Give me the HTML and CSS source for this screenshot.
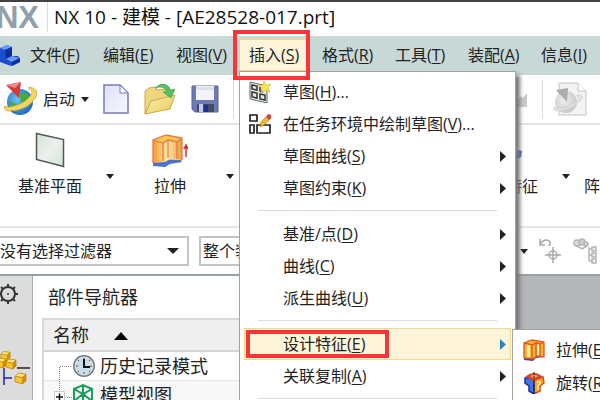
FILE: index.html
```html
<!DOCTYPE html>
<html lang="zh-CN">
<head>
<meta charset="utf-8">
<title>NX 10 - 建模</title>
<link rel="stylesheet" href="styles.css">
</head>
<body>
<svg class="defs" aria-hidden="true">
  <defs>
    <linearGradient id="gOrange" x1="0" x2="1"><stop offset="0" stop-color="#f59a2c"/><stop offset=".5" stop-color="#fbe9a8"/><stop offset="1" stop-color="#ef9a3c"/></linearGradient>
    <linearGradient id="gPlane" x1="0" y1="0" x2="1" y2="1"><stop offset="0" stop-color="#cfe3d3"/><stop offset=".5" stop-color="#eef0ee"/><stop offset="1" stop-color="#cfe3d0"/></linearGradient>
    <linearGradient id="gPage" x1="0" y1="0" x2="1" y2="1"><stop offset="0" stop-color="#dfe0fa"/><stop offset="1" stop-color="#f8f8ff"/></linearGradient>
    <linearGradient id="gFolder" x1="0" y1="0" x2="1" y2="1"><stop offset="0" stop-color="#fdf0b4"/><stop offset="1" stop-color="#e9c95a"/></linearGradient>
    <radialGradient id="gGlobe" cx=".4" cy=".4" r=".7"><stop offset="0" stop-color="#6ec2f5"/><stop offset="1" stop-color="#1560b8"/></radialGradient>
    <radialGradient id="gGrey" cx=".4" cy=".4" r=".7"><stop offset="0" stop-color="#efefef"/><stop offset="1" stop-color="#c4c4c4"/></radialGradient>
    <symbol id="caret" viewBox="0 0 8 5"><path d="M0 0h8L4 5z"/></symbol>
    <symbol id="arrow" viewBox="0 0 6 11"><path d="M0 0l6 5.500L0 11z"/></symbol>
    <symbol id="cube" viewBox="0 0 12 12"><path d="M1 4l3-3 7 1-3 3z" fill="#ffe66b"/><path d="M1 4l7 1v6L1 9z" fill="#fbc62b"/><path d="M8 5l3-3v6l-3 3z" fill="#d98e12"/><path d="M1 4l3-3 7 1v6l-3 3-7-2zM1 4l7 1v6M8 5l3-3" fill="none" stroke="#b97a10" stroke-width=".7"/></symbol>
  </defs>
</svg>

<header class="titlebar">
  <span class="logo">NX</span>
  <h1 class="title">NX 10 - 建模 - [AE28528-017.prt]</h1>
</header>

<nav class="menubar">
  <svg class="app-icon" viewBox="0 0 20 22"><path d="M0 4l7-3 5 2v9l6 0 2 3v3l-9 4-11-4z" fill="#1c4fd0"/><path d="M0 4l7-3 5 2-7 3z" fill="#6f9bff"/><path d="M5 6l7-3v9l-6 3z" fill="#0d2f9c"/><path d="M6 15l6-3 7 2-7 4z" fill="#6c98fa"/><path d="M12 18l8-4v4l-8 4z" fill="#0d2f9c"/></svg>
  <button class="menu-button">文件(<u>F</u>)</button>
  <button class="menu-button">编辑(<u>E</u>)</button>
  <button class="menu-button">视图(<u>V</u>)</button>
  <button class="menu-button open">插入(<u>S</u>)</button>
  <button class="menu-button">格式(<u>R</u>)</button>
  <button class="menu-button">工具(<u>T</u>)</button>
  <button class="menu-button">装配(<u>A</u>)</button>
  <button class="menu-button">信息(<u>I</u>)</button>
</nav>

<section class="toolbar">
  <button class="tool start">
    <svg width="34" height="34" viewBox="0 0 34 34"><circle cx="17" cy="20" r="13" fill="url(#gGlobe)"/><path d="M18 10q8 1 9 8l-4 5-5-3-1-6zM7 19l6 3 3 5-3 3q-6-3-6-11z" fill="#43ad3c"/><path d="M26 5q11 2 7 10Q25 29 5 29q-5-1-3-5 2 2 9 0Q25 20 29 11q1-3-3-4z" fill="#f3d765" stroke="#c69a26" stroke-width=".7"/><path d="M3 3l15-3-2 16z" fill="#d9363a"/><path d="M3 3l15-3-6 6z" fill="#f28a85"/></svg>
    <span>启动</span>
    <svg class="caret" width="8" height="5"><use href="#caret"/></svg>
  </button>
  <button class="tool" aria-label="新建"><svg width="26" height="30" viewBox="0 0 26 30"><path d="M1 1h16l8 8v20H1z" fill="url(#gPage)" stroke="#7779bd" stroke-width="1.500"/><path d="M17 1v8h8z" fill="#fff" stroke="#7779bd"/></svg></button>
  <button class="tool" aria-label="打开"><svg width="34" height="34" viewBox="0 0 34 34"><path d="M2 32V9l4-3 6-1 2 3 12-1v8z" fill="#f0d77d" stroke="#c8a94c"/><path d="M2 32l6-13 24-6-5 14z" fill="url(#gFolder)" stroke="#c8a94c"/><path d="M12 6Q22-3 28 8l4-1-4 9-8-6 4-1q-4-6-12-3z" fill="#57bd5e" stroke="#38974b" stroke-width=".6"/></svg></button>
  <button class="tool" aria-label="保存"><svg width="28" height="28" viewBox="0 0 28 28"><path d="M1 1h26v26H4l-3-3z" fill="#6c7bb4" stroke="#5664a0"/><path d="M5 1h18v14H5z" fill="#f2f4f8"/><path d="M5 2h18v3H5z" fill="#dbe0ea"/><path d="M6 19h17v8H6z" fill="#444b62"/><path d="M8 19h4v8H8z" fill="#c5cbdb"/><path d="M13 20h4v7h-4z" fill="#1c2f99"/></svg></button>
  <span class="divider"></span>
  <span class="covered"></span>
  <svg class="fragment" width="16" height="15" viewBox="0 0 16 15"><path d="M0 15V4l6 4 3-4 2 2 4-5v14z" fill="#c9c9c9"/></svg>
  <span class="divider"></span>
  <button class="tool update" aria-label="更新"><svg width="34" height="34" viewBox="0 0 34 34"><path d="M6 1h19l8 8v24H6z" fill="#f3f3f3" stroke="#c4c4c4"/><path d="M25 1v8h8" fill="#fff" stroke="#c4c4c4"/><circle cx="13" cy="20" r="11" fill="url(#gGrey)"/><path d="M24 13q9-1 3 6-9 9-23 10-4 0-3-4 3 2 9 1 11-3 16-9z" fill="#e6e6e6" stroke="#c4c4c4" stroke-width=".6"/><path d="M3 8l12-2-1 14z" fill="#aaadac"/></svg></button>
  <svg class="caret" width="8" height="5"><use href="#caret"/></svg>
</section>

<section class="ribbon">
  <button class="command"><svg width="30" height="36" viewBox="0 0 30 36"><path d="M1.500 1.500l27 6v27l-27-7z" fill="url(#gPlane)" stroke="#555" stroke-width="1.500"/></svg><span>基准平面</span></button>
  <svg class="caret" width="8" height="5"><use href="#caret"/></svg>
  <button class="command"><svg width="36" height="36" viewBox="0 0 36 36"><path d="M1 30l7-3 21 1 1 2-12 2-5 3-12-1z" fill="#4c6fd0"/><path d="M1 8l11-4 18 2v22l-12-1-5 3-12 1z" fill="url(#gOrange)"/><path d="M1 8l13-5 16 3-5 4-9-2-5 3z" fill="#f9c648"/><path d="M1 31V8l13-5 16 3v22M1 8l10 3 5-3 9 2 5-4M11 11v18M16 8v18M25 10v17" fill="none" stroke="#e8794c" stroke-width="1.300"/><path d="M34 25V14m-2 3l2-4 2 4" fill="none" stroke="#d42e33" stroke-width="1.500"/></svg><span>拉伸</span></button>
  <svg class="caret" width="8" height="5"><use href="#caret"/></svg>
  <span class="covered"></span>
  <button class="command end"><svg width="14" height="36" viewBox="0 0 14 36"><path d="M4 25l6-7 4 1-1 6-6 3z" fill="#3a62bd"/></svg><span>特征</span></button>
  <svg class="caret" width="8" height="5"><use href="#caret"/></svg>
  <button class="command start"><span>阵列</span></button>
</section>

<section class="filters">
  <div class="select-box filter"><select aria-label="选择过滤器"><option>没有选择过滤器</option></select><svg class="caret" width="12" height="6" viewBox="0 0 12 6"><path d="M0 0h12L6 6z"/></svg></div>
  <div class="select-box scope"><select aria-label="选择范围"><option>整个装配</option></select></div>
  <div class="snap">
    <svg class="caret" width="8" height="5"><use href="#caret"/></svg>
    <svg width="24" height="26" viewBox="0 0 24 26" fill="none" stroke="#a8a8a8" stroke-width="1.500"><path d="M2 1v6h5M2 7q2-5 7-5 5 1 2 6"/><circle cx="15" cy="17" r="4"/><path d="M15 9v16M7 17h16"/></svg>
    <svg width="26" height="26" viewBox="0 0 26 26" fill="none" stroke="#b5b5b5" stroke-width="1.500"><circle cx="5" cy="5" r="3" fill="#ddd"/><circle cx="10" cy="4" r="3" fill="#ccc"/><circle cx="14" cy="6" r="2" fill="#ddd"/><path d="M5 8l5 3 5-3"/><path d="M17 9v14M17 11h5M17 17h5M17 23h5"/><path d="M20 9h4v4h-4zM20 15h4v4h-4zM20 21h4v4h-4z" fill="#eee"/></svg>
  </div>
</section>

<main class="workspace">
  <aside class="rail">
    <svg width="20" height="20" viewBox="0 0 20 20" fill="none" stroke="#333"><circle cx="10" cy="10" r="7" stroke-width="2"/><path d="M10 0v3M10 17v3M0 10h3M17 10h3M3 3l2 2M15 15l2 2M17 3l-2 2M5 15l-2 2" stroke-width="2"/><circle cx="10" cy="10" r="1" fill="#333" stroke="none"/></svg>
    <svg width="32" height="36" viewBox="0 0 32 36"><path d="M4 18v17M4 28h8" stroke="#2222b0" stroke-width="1.500"/><path d="M17 18h13" stroke="#222" stroke-width="1.500"/><use href="#cube" x="0" y="0" width="11" height="12"/><use href="#cube" x="-5" y="7" width="12" height="12"/><use href="#cube" x="5" y="8" width="12" height="12"/><use href="#cube" x="14" y="22" width="13" height="13"/></svg>
  </aside>
  <section class="navigator">
    <h2>部件导航器</h2>
    <table class="tree">
      <thead><tr><th>名称 <svg width="14" height="8" viewBox="0 0 14 8"><path d="M0 8l7-8 7 8z"/></svg></th></tr></thead>
      <tbody>
        <tr><td><div class="node">
          <svg class="branch" width="18" height="28" viewBox="0 0 18 28"><path d="M5.500 28V14.500H18" fill="none" stroke="#888" stroke-dasharray="1 1"/></svg>
          <svg width="24" height="24" viewBox="0 0 24 24"><circle cx="12" cy="12" r="11" fill="#777f82"/><circle cx="12" cy="12" r="9" fill="#c9dcea" stroke="#e5e5e2"/><path d="M12 4v2M12 18v2M4 12h2M18 12h2M6 6l1 1M18 6l-1 1M6 18l1-1M18 18l-1-1" stroke="#456"/><path d="M12 5v8h6" fill="none" stroke="#111" stroke-width="2"/></svg>
          <span>历史记录模式</span></div></td></tr>
        <tr><td><div class="node">
          <svg class="branch" width="18" height="28" viewBox="0 0 18 28"><path d="M5.500 0v10M13 16.500h5" fill="none" stroke="#888" stroke-dasharray="1 1"/><path d="M.5 10.500h10v11H.5z" fill="#fff" stroke="#ccc"/><path d="M2 16h7M5.500 12.500v7" stroke="#111" stroke-width="1.500"/></svg>
          <svg width="24" height="24" viewBox="0 0 24 24"><path d="M2 6l9-4 9 4v12l-9 4-9-4zM2 6l9 5 9-5M11 2v20M2 18l9-7 9 7" fill="none" stroke="#16a05a" stroke-width="2"/><path d="M17 18h7" stroke="#e33" stroke-width="2"/></svg>
          <span>模型视图</span></div></td></tr>
      </tbody>
    </table>
  </section>
</main>

<div class="menu insert-menu">
  <button class="item"><svg class="icon" width="22" height="22" viewBox="0 0 22 22"><path d="M1 1l17 4v17L1 18z" fill="#dfe9df" stroke="#667" stroke-width="1"/><path d="M3 4l5 1v4l-5-1zM3 11l5 1v5l-5-1zM11 13l5 1v5l-5-1zM11 6v4l3 1" fill="none" stroke="#333" stroke-width="1.500"/><path d="M15 0l2 4 5-1-3 4 2 4-5-2-4 3 1-5-4-3 5 0z" fill="#f9e547" stroke="#b9a52a" stroke-width=".5"/></svg>草图(<u>H</u>)...</button>
  <button class="item"><svg class="icon" width="22" height="22" viewBox="0 0 22 22"><path d="M1 2h7v6H1zM1 12h4v8H1zM8 12h13v8H8z" fill="#fff" stroke="#222" stroke-width="1.700"/><path d="M11 14l1-5 7-7 3 3-7 7z" fill="#f2b72e" stroke="#a87414" stroke-width=".6"/><path d="M17 4l2-3 3 1v3l-2 2z" fill="#d9413a"/></svg>在任务环境中绘制草图(<u>V</u>)...</button>
  <button class="item">草图曲线(<u>S</u>)<svg class="arrow" width="6" height="11"><use href="#arrow"/></svg></button>
  <button class="item">草图约束(<u>K</u>)<svg class="arrow" width="6" height="11"><use href="#arrow"/></svg></button>
  <hr>
  <button class="item">基准/点(<u>D</u>)<svg class="arrow" width="6" height="11"><use href="#arrow"/></svg></button>
  <button class="item">曲线(<u>C</u>)<svg class="arrow" width="6" height="11"><use href="#arrow"/></svg></button>
  <button class="item">派生曲线(<u>U</u>)<svg class="arrow" width="6" height="11"><use href="#arrow"/></svg></button>
  <hr>
  <button class="item active">设计特征(<u>E</u>)<svg class="arrow" width="6" height="11"><use href="#arrow"/></svg></button>
  <button class="item">关联复制(<u>A</u>)<svg class="arrow" width="6" height="11"><use href="#arrow"/></svg></button>
  <hr>
</div>

<div class="menu submenu">
  <button class="item"><svg class="icon" width="22" height="22" viewBox="0 0 22 22"><path d="M1 19l4-2 15 1-7 1-3 3-9-1z" fill="#2c49b0"/><path d="M1 4l8-3 12 2v15l-8 0-4 2-8-1z" fill="#f9b233"/><path d="M4 5l3 0v13H4zM14 5h3v12h-3z" fill="#fff0a8"/><path d="M1 19V4l8-3 12 2v15l-7-1-4 3zM1 4l8 2 4-2 4 1 4-2M9 6v13M13 4v13M17 5v12" fill="none" stroke="#e0561c" stroke-width="1.300"/></svg>拉伸(<u>E</u>)...</button>
  <button class="item"><svg class="icon" width="22" height="22" viewBox="0 0 22 22"><path d="M11 8l9-3 1 6-4 3v5l-6 3z" fill="#f7a823" stroke="#dc4b1c" stroke-width="1.500"/><path d="M2 6h5l4 3v13l-5-3v-5l-4-3z" fill="#3d73e6" stroke="#1b2d9c" stroke-width="1.500"/><path d="M2 5q9-8 18 0l-5 2-4 3-4-3z" fill="#d7432a"/><path d="M7 4q4-3 8 0l-4 3z" fill="#f49a4a"/><path d="M11 0v22" stroke="#222" stroke-dasharray="3 1"/><path d="M14 10h3v2l-2 2v4" fill="none" stroke="#fff0a8" stroke-width="1.500"/></svg>旋转(<u>R</u>)...</button>
</div>

<span class="callout menu-callout"></span>
<span class="callout item-callout"></span>
</body>
</html>
```
FILE: styles.css
```css
* { box-sizing: border-box; }

body {
  margin: 0;
  height: 100vh;
  overflow: hidden;
  display: flex;
  flex-direction: column;
  position: relative;
  background: #fff;
  color: #222;
  font: 16px/24px "Open Sans", "Noto Sans CJK SC", sans-serif;
  white-space: nowrap;
}

svg { display: block; flex: none; }

button {
  font: inherit;
  color: inherit;
  background: none;
  border: 0;
  padding: 0;
  white-space: nowrap;
}

u { text-underline-offset: 2px; }

.defs { position: absolute; width: 0; height: 0; }

.caret, .arrow { fill: #222; }

.titlebar {
  flex: none;
  display: flex;
  height: 36px;
  border-top: 2px solid #424143;
}

.logo {
  width: 48px;
  height: 30px;
  margin-right: 6px;
  border-right: 1px solid #ddd;
  display: flex;
  justify-content: flex-end;
  padding-right: 8px;
  color: #8f9fab;
  font: bold 31px/32px "Liberation Sans", sans-serif;
}

.title { margin: 0; font-size: 19px; font-weight: 400; line-height: 30px; color: #111; }

.menubar {
  flex: none;
  height: 39px;
  display: grid;
  grid-template-columns: 30px;
  grid-auto-columns: 73px;
  grid-auto-flow: column;
  align-items: center;
  padding-bottom: 2px;
  background: #c8d8d7;
}

.app-icon { width: 20px; height: 22px; }

.menu-button { height: 32px; text-align: left; }

.menu-button.open {
  width: 71px;
  margin-left: -10px;
  padding-left: 9px;
  background: #fdf4d9;
  border: 1px solid #f6d27a;
}

.toolbar {
  flex: none;
  height: 50px;
  display: flex;
  align-items: center;
  border-bottom: 2px solid #e6e6e6;
  padding-left: 3px;
  gap: 14px;
}

.tool { display: flex; flex: none; align-items: center; gap: 6px; }

.divider { flex: none; width: 1px; height: 38px; background: #dcdcdc; }

.toolbar .covered { flex: 0 0 250px; }

.tool.update { margin-left: -4px; }

.ribbon {
  flex: none;
  height: 103px;
  display: flex;
  align-items: flex-start;
  padding-top: 7px;
  border-bottom: 2px solid #e6e6e6;
}

.command {
  flex: 0 0 100px;
  display: flex;
  flex-direction: column;
  align-items: center;
  gap: 6px;
}

.command.end { align-items: flex-end; padding-right: 18px; }

.command.end svg { margin-right: 16px; }

.command.start { align-items: flex-start; padding: 42px 0 0 8px; }

.ribbon .caret { margin: 42px 6px 0; }

.ribbon .covered { flex: 0 0 216px; }

.filters {
  flex: none;
  height: 46px;
  display: flex;
  align-items: center;
  gap: 10px;
}

.select-box {
  display: flex;
  align-items: center;
  height: 30px;
  border: 2px solid #c3c3c3;
  padding-right: 8px;
}

.filter { width: 189px; border-left: 0; }

.scope { width: 160px; padding-left: 2px; }

.select-box select {
  flex: 1;
  min-width: 0;
  appearance: none;
  border: 0;
  padding: 0;
  background: none;
  font: inherit;
  color: inherit;
}

.snap { display: flex; align-items: center; gap: 10px; margin-left: 151px; }

.workspace {
  flex: 1;
  min-height: 0;
  display: flex;
  background: #b4b6b9;
  border-top: 2px solid #9ba2a7;
}

.rail {
  width: 33px;
  background: #dcdcdc;
  border-right: 1px solid #a9aeb2;
  padding-top: 8px;
  display: flex;
  flex-direction: column;
  gap: 46px;
}

.rail svg:first-child { margin-left: -2px; }

.navigator { width: 280px; padding: 6px 0 0 9px; background: #fff; }

.navigator h2 { margin: 0 0 6px 6px; font-size: 18px; font-weight: 400; line-height: 30px; }

.tree {
  width: 100%;
  border-collapse: separate;
  border-spacing: 0;
  border: 2px solid #d9d9d9;
  font-size: 18px;
  line-height: 28px;
}

.tree th {
  height: 32px;
  padding: 0 0 0 9px;
  text-align: left;
  font-weight: 400;
  background: #efefef;
  border-bottom: 2px solid #d5d5d5;
}

.tree th svg { display: inline-block; margin-left: 20px; vertical-align: 2px; }

.tree td { padding: 0 0 0 10px; height: 29px; border-bottom: 1px solid #e6e6e6; }

.tree tr:nth-child(2) td { background: #f8f8f8; }

.node { display: flex; align-items: center; height: 28px; }

.node span { margin-left: 4px; }

.menu {
  position: absolute;
  background: #fff;
  border: 1px solid #a3a3a3;
  z-index: 1;
}

.insert-menu {
  left: 239px;
  top: 71px;
  width: 277px;
  padding: 4px;
  box-shadow: 4px 4px 4px #777;
}

.submenu { left: 512px; top: 329px; width: 200px; padding: 3px 0; z-index: 2; }

.item {
  position: relative;
  display: flex;
  align-items: center;
  width: 100%;
  height: 32px;
  padding-left: 38px;
  border: 1px solid transparent;
}

.submenu .item { padding-left: 42px; height: 33px; }

.item .icon { position: absolute; left: 4px; }

.submenu .icon { left: 9px; }

.item .arrow { margin-left: auto; margin-right: 4px; }

.item.active { background: #fdf4d9; border: 1px solid #f8d98c; }

.item.active .arrow { fill: #2c86b5; }

.menu hr { height: 14px; margin: 0 14px; border: 0; background: linear-gradient(#ddd, #ddd) 0 6px / 100% 1px no-repeat; }

.callout { position: absolute; z-index: 3; border: 4px solid #fb3438; }

.menu-callout { left: 233px; top: 30px; width: 77px; height: 50px; }

.item-callout { left: 246px; top: 330px; width: 143px; height: 28px; }
```
